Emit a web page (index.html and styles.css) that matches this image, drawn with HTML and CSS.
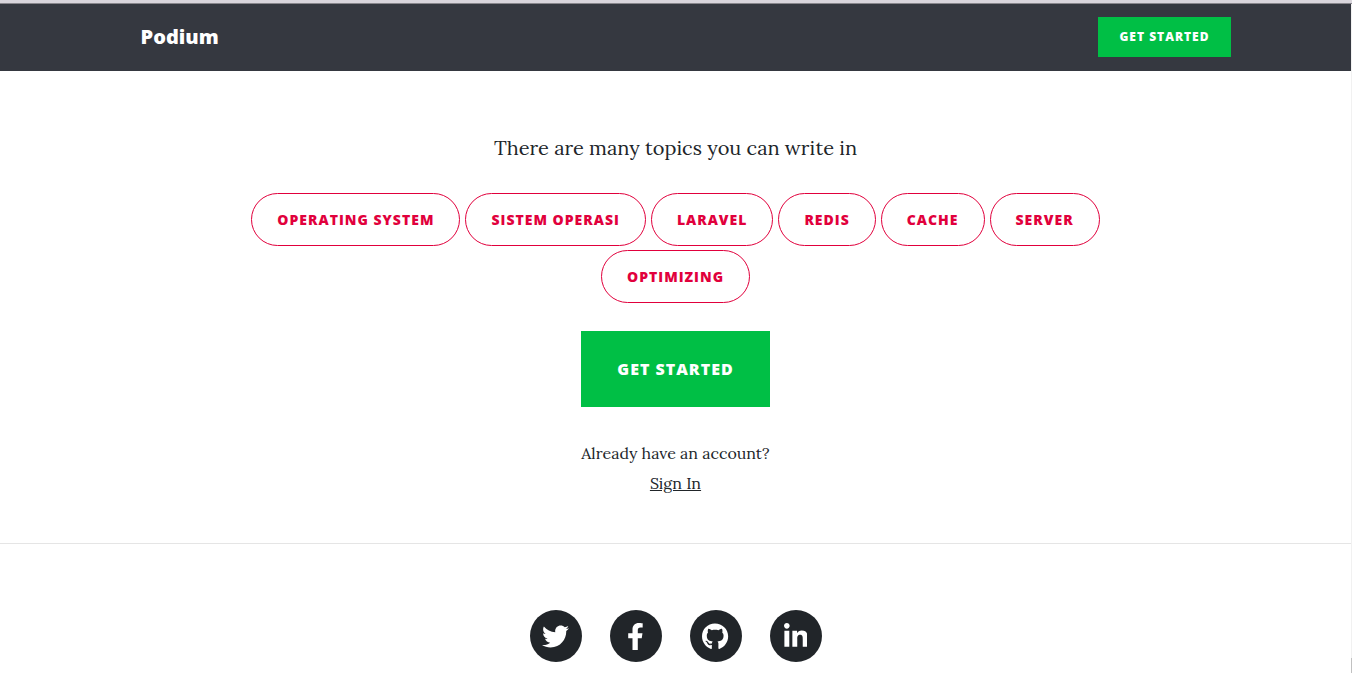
FILE: index.html
```html
<!DOCTYPE html>
<html lang="en">
<head>
<meta charset="utf-8">
<meta name="viewport" content="width=device-width, initial-scale=1">
<title>Podium</title>
<link rel="stylesheet" href="styles.css">
</head>
<body>
<div class="window-edge"></div>
<div class="viewport">
  <div class="page">
    <header class="navbar">
      <div class="container">
        <a class="brand" href="#">Podium</a>
        <button class="btn btn-small" type="button">Get Started</button>
      </div>
    </header>
    <main class="topics">
      <p class="lead">There are many topics you can write in</p>
      <div class="tags">
        <button class="tag" type="button">Operating System</button>
        <button class="tag" type="button">Sistem Operasi</button>
        <button class="tag" type="button">Laravel</button>
        <button class="tag" type="button">Redis</button>
        <button class="tag" type="button">Cache</button>
        <button class="tag" type="button">Server</button>
        <button class="tag" type="button">Optimizing</button>
      </div>
      <button class="btn btn-large" type="button">Get Started</button>
      <div class="account">
        <p>Already have an account?</p>
        <a href="#">Sign In</a>
      </div>
    </main>
    <footer class="footer">
      <a class="social" href="#" aria-label="Twitter"><svg viewBox="0 0 512 512"><path d="M459.37 151.716c.325 4.548.325 9.097.325 13.645 0 138.72-105.583 298.558-298.558 298.558-59.452 0-114.68-17.219-161.137-47.106 8.447.974 16.568 1.299 25.34 1.299 49.055 0 94.213-16.568 130.274-44.832-46.132-.975-84.792-31.188-98.112-72.772 6.498.974 12.995 1.624 19.818 1.624 9.421 0 18.843-1.3 27.614-3.573-48.081-9.747-84.143-51.98-84.143-102.985v-1.299c13.969 7.797 30.214 12.67 47.431 13.319-28.264-18.843-46.781-51.005-46.781-87.391 0-19.492 5.197-37.36 14.294-52.954 51.655 63.675 129.3 105.258 216.365 109.807-1.624-7.797-2.599-15.918-2.599-24.04 0-57.828 46.782-104.934 104.934-104.934 30.213 0 57.502 12.67 76.67 33.137 23.715-4.548 46.456-13.32 66.599-25.34-7.798 24.366-24.366 44.833-46.132 57.827 21.117-2.273 41.584-8.122 60.426-16.243-14.292 20.791-32.161 39.308-52.628 54.253z"/></svg></a>
      <a class="social" href="#" aria-label="Facebook"><svg viewBox="0 0 320 512"><path d="M279.14 288l14.22-92.66h-88.91v-60.13c0-25.35 12.42-50.06 52.24-50.06h40.42V6.26S260.43 0 225.36 0c-73.22 0-121.08 44.38-121.08 124.72v70.62H22.89V288h81.39v224h100.17V288z"/></svg></a>
      <a class="social" href="#" aria-label="GitHub"><svg viewBox="0 0 496 512"><path d="M165.9 397.4c0 2-2.3 3.6-5.2 3.6-3.3.3-5.6-1.3-5.6-3.6 0-2 2.3-3.6 5.2-3.6 3-.3 5.6 1.3 5.6 3.6zm-31.1-4.5c-.7 2 1.3 4.3 4.3 4.9 2.6 1 5.6 0 6.2-2s-1.3-4.3-4.3-5.2c-2.6-.7-5.5.3-6.2 2.3zm44.2-1.7c-2.9.7-4.9 2.6-4.6 4.9.3 2 2.9 3.3 5.9 2.6 2.9-.7 4.9-2.6 4.6-4.6-.3-1.9-3-3.2-5.9-2.9zM244.8 8C106.1 8 0 113.3 0 252c0 110.9 69.8 205.8 169.5 239.2 12.8 2.3 17.3-5.6 17.3-12.1 0-6.2-.3-40.4-.3-61.4 0 0-70 15-84.7-29.8 0 0-11.4-29.1-27.8-36.6 0 0-22.9-15.7 1.6-15.4 0 0 24.9 2 38.6 25.8 21.9 38.6 58.6 27.5 72.9 20.9 2.3-16 8.8-27.1 16-33.7-55.9-6.2-112.3-14.3-112.3-110.5 0-27.5 7.6-41.3 23.6-58.9-2.6-6.5-11.1-33.3 2.6-67.9 20.9-6.5 69 27 69 27 20-5.6 41.5-8.5 62.8-8.5s42.8 2.9 62.8 8.5c0 0 48.1-33.6 69-27 13.7 34.7 5.2 61.4 2.6 67.9 16 17.7 25.8 31.5 25.8 58.9 0 96.5-58.9 104.2-114.8 110.5 9.2 7.9 17 22.9 17 46.4 0 33.7-.3 75.4-.3 83.6 0 6.5 4.6 14.4 17.3 12.1C428.2 457.8 496 362.9 496 252 496 113.3 383.5 8 244.8 8z"/></svg></a>
      <a class="social" href="#" aria-label="LinkedIn"><svg viewBox="0 0 448 512"><path d="M100.3 448H7.4V148.9h92.9V448zM53.8 108.1C24.1 108.1 0 83.5 0 53.8S24.1 0 53.8 0s53.8 24.1 53.8 53.8-24.1 54.3-53.8 54.3zM448 448h-92.7V302.4c0-34.7-.7-79.2-48.3-79.2-48.3 0-55.7 37.7-55.7 76.7V448h-92.8V148.9h89.1v40.8h1.3c12.4-23.5 42.7-48.3 87.9-48.3 94 0 111.3 61.9 111.3 142.3V448z"/></svg></a>
    </footer>
  </div>
  <div class="rail"><div class="thumb"></div></div>
</div>
</body>
</html>
```
FILE: styles.css
```css
* { box-sizing: border-box; }

body {
  margin: 0;
  min-height: 100vh;
  display: flex;
  flex-direction: column;
  background: #fff;
  color: #212529;
  font-family: Lora, "Liberation Serif", serif;
}

p { margin: 0; }

.window-edge {
  height: 4px;
  background: #d9d5dc;
  border-bottom: 1px solid #88868c;
}

.viewport {
  flex: 1;
  display: flex;
}

.page { flex: 1; }

/* Scroll track on the right edge */
.rail {
  width: 1px;
  background: #f1f1f1;
  display: flex;
  align-items: flex-end;
}

.thumb {
  width: 1px;
  height: 15px;
  background: #c1c1c1;
}

.navbar {
  padding: 13px 0 14px;
  background: #353840;
}

.container {
  max-width: 1140px;
  margin: 0 auto;
  padding: 0 15px;
  display: flex;
  align-items: center;
  justify-content: space-between;
}

.brand {
  padding-left: 20px;
  color: #fff;
  font: 800 20px/30px "Open Sans", sans-serif;
  text-decoration: none;
}

.btn,
.tag {
  font-family: "Open Sans", sans-serif;
  font-weight: 800;
  line-height: 24px;
  letter-spacing: 1px;
  text-transform: uppercase;
  cursor: pointer;
}

.btn {
  border: 1px solid #00bf45;
  background: #00bf45;
  color: #fff;
}

.btn-small {
  padding: 10px 20px;
  font-size: 12px;
  line-height: 18px;
}

.btn-large {
  margin-top: 28px;
  padding: 25px 35px;
  font-size: 16px;
}

.topics {
  display: flex;
  flex-direction: column;
  align-items: center;
  padding: 62px 15px 45px;
  border-bottom: 1px solid #e5e5e5;
}

.lead {
  font-size: 20px;
  line-height: 30px;
}

.tags {
  max-width: 920px;
  margin-top: 30px;
  display: flex;
  flex-wrap: wrap;
  justify-content: center;
  gap: 4px 5px;
}

.tag {
  padding: 15px 25px;
  border: 1px solid #e1003c;
  border-radius: 30px;
  background: transparent;
  color: #e1003c;
  font-size: 14px;
  line-height: 21px;
}

.account {
  margin-top: 31px;
  font-size: 16px;
  line-height: 30px;
  text-align: center;
}

.account a { color: inherit; }

.footer {
  padding: 66px 15px 0;
  display: flex;
  justify-content: center;
  gap: 28px;
}

.social {
  width: 52px;
  height: 52px;
  display: flex;
  align-items: center;
  justify-content: center;
  border-radius: 50%;
  background: #212529;
}

.social svg {
  height: 27px;
  fill: #fff;
}
```
